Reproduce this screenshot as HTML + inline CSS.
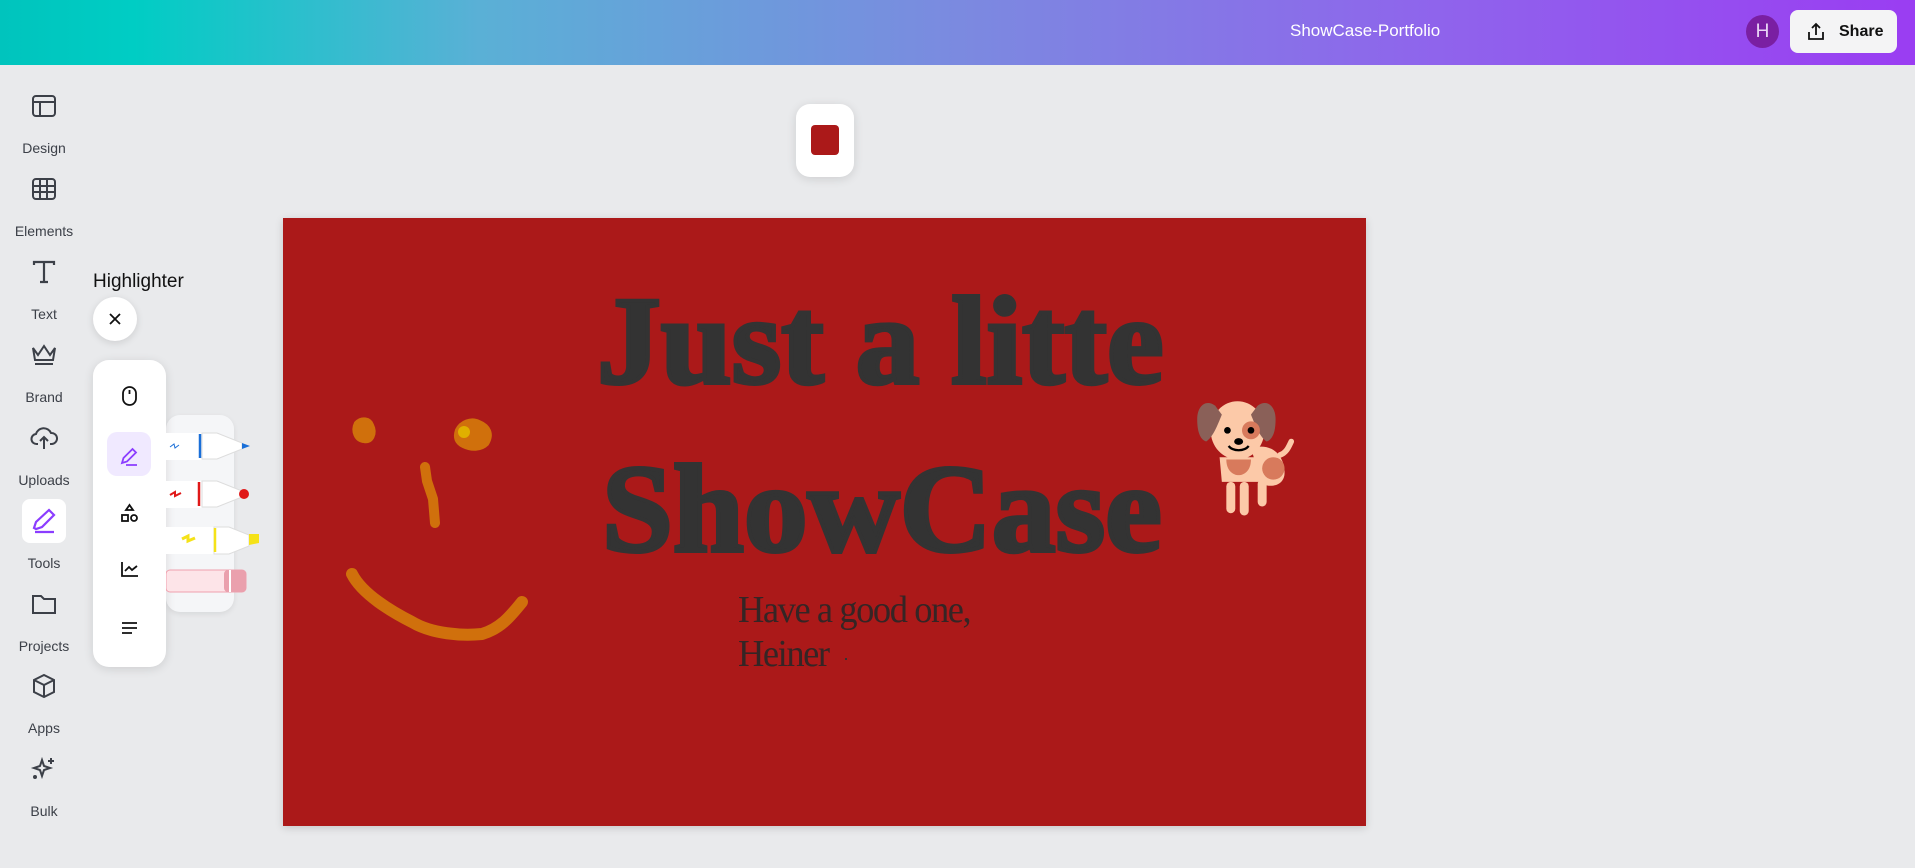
<!DOCTYPE html>
<html><head><meta charset="utf-8"><style>
*{margin:0;padding:0;box-sizing:border-box}
body{width:1915px;height:868px;overflow:hidden;background:#e9eaec;font-family:"Liberation Sans",sans-serif;position:relative}
.hdr{position:absolute;left:0;top:0;width:1915px;height:65px;background:linear-gradient(90deg,#00c4bd 0%,#00cdc4 7%,#5ab0d6 25%,#7b8ae0 50%,#8f64ec 75%,#9a3df2 100%)}
.title{position:absolute;left:1290px;top:21px;color:#fff;font-size:17px}
.av{position:absolute;left:1746px;top:15px;width:33px;height:33px;border-radius:50%;background:#7a1fa2;color:#e9d5f5;font-size:19px;text-align:center;line-height:33px}
.share{position:absolute;left:1790px;top:10px;width:107px;height:43px;border-radius:8px;background:#f4f4f5;font-weight:bold;font-size:16px;color:#111}
.share span{position:absolute;left:49px;top:13px}
.sb{position:absolute;left:0;width:88px;text-align:center;font-size:14px;color:#3c4048}
.ic{position:absolute;left:30px;width:28px;height:28px}
.panel{position:absolute;background:#fff;border-radius:16px;box-shadow:0 2px 10px rgba(0,0,0,.12)}
.canvas{position:absolute;left:283px;top:218px;width:1083px;height:608px;background:#ab1919;box-shadow:0 2px 8px rgba(0,0,0,.15);overflow:hidden}
.big{position:absolute;font-family:"Liberation Serif",serif;font-weight:bold;font-size:125px;color:#333;white-space:nowrap;line-height:1;-webkit-text-stroke:4px #333;transform:scaleX(1.02);transform-origin:0 0}
.sm{position:absolute;font-family:"Liberation Serif",serif;font-size:38px;letter-spacing:-1.5px;color:#352525;white-space:nowrap;line-height:1;transform:scaleX(0.96);transform-origin:0 0}
</style></head><body>
<div class="hdr">
<div class="title">ShowCase-Portfolio</div>
<div class="av">H</div>
<div class="share"><svg style="position:absolute;left:16px;top:12px" width="20" height="20" viewBox="0 0 20 20" fill="none" stroke="#111" stroke-width="1.8"><path d="M10 13V2M6 6l4-4 4 4M3 10v7h14v-7"/></svg><span>Share</span></div>
</div>

<svg class="ic" style="top:92px" viewBox="0 0 28 28" fill="none" stroke="#3c4048" stroke-width="2"><rect x="3" y="4" width="22" height="20" rx="3"/><path d="M3 10h22M10 10v14"/></svg>
<div class="sb" style="top:140px">Design</div>
<svg class="ic" style="top:175px" viewBox="0 0 28 28" fill="none" stroke="#3c4048" stroke-width="2"><rect x="3" y="4" width="22" height="20" rx="3"/><path d="M3 11h22M3 17h22M10 4v20M17 4v20"/></svg>
<div class="sb" style="top:223px">Elements</div>
<svg class="ic" style="top:258px" viewBox="0 0 28 28" fill="none" stroke="#3c4048" stroke-width="2.2"><path d="M4 7V4h20v3M14 4v20M10 24h8"/></svg>
<div class="sb" style="top:306px">Text</div>
<svg class="ic" style="top:341px" viewBox="0 0 28 28" fill="none" stroke="#3c4048" stroke-width="2"><path d="M3 7l5 7 6-9 6 9 5-7-2 12H5z M5 23h18"/></svg>
<div class="sb" style="top:389px">Brand</div>
<svg class="ic" style="top:424px" viewBox="0 0 28 28" fill="none" stroke="#3c4048" stroke-width="2"><path d="M8 20H7a5 5 0 0 1-1-10 8 8 0 0 1 15-1 5 5 0 0 1 1 11h-2M14 25V13M10 17l4-4 4 4"/></svg>
<div class="sb" style="top:472px">Uploads</div>
<div style="position:absolute;left:22px;top:499px;width:44px;height:44px;border-radius:8px;background:#fff"></div>
<svg class="ic" style="top:507px" viewBox="0 0 28 28" fill="none" stroke="#8b3dff" stroke-width="2.2"><path d="M4 21l2-6L19 3l5 5-12 12-6 2z M5 25h19"/></svg>
<div class="sb" style="top:555px">Tools</div>
<svg class="ic" style="top:590px" viewBox="0 0 28 28" fill="none" stroke="#3c4048" stroke-width="2"><path d="M3 6h8l3 3h11v14H3z"/></svg>
<div class="sb" style="top:638px">Projects</div>
<svg class="ic" style="top:672px" viewBox="0 0 28 28" fill="none" stroke="#3c4048" stroke-width="2"><path d="M14 3l10 5v12l-10 5-10-5V8z M4 8l10 5 10-5M14 13v12"/></svg>
<div class="sb" style="top:720px">Apps</div>
<svg class="ic" style="top:755px" viewBox="0 0 28 28" fill="none" stroke="#3c4048" stroke-width="2"><path d="M12 5l2 6 6 2-6 2-2 6-2-6-6-2 6-2z M21 3v6M18 6h6"/><circle cx="5" cy="22" r="1" fill="#3c4048"/></svg>
<div class="sb" style="top:803px">Bulk</div>

<div style="position:absolute;left:93px;top:271px;font-size:19px;color:#111">Highlighter</div>
<div style="position:absolute;left:93px;top:297px;width:44px;height:44px;border-radius:50%;background:#fff;box-shadow:0 2px 8px rgba(0,0,0,.12)"><svg style="position:absolute;left:14px;top:14px" width="16" height="16" viewBox="0 0 16 16" stroke="#111" stroke-width="1.8"><path d="M3 3l10 10M13 3L3 13"/></svg></div>
<div style="position:absolute;left:166px;top:415px;width:68px;height:197px;border-radius:14px;background:#f5f6f8;box-shadow:0 2px 6px rgba(0,0,0,.08)"></div>
<div class="panel" style="left:93px;top:360px;width:73px;height:307px"></div>
<div style="position:absolute;left:107px;top:432px;width:44px;height:44px;border-radius:10px;background:#f0e9ff"></div>
<svg style="position:absolute;left:93px;top:360px" width="73" height="307" viewBox="0 0 73 307" fill="none" stroke="#111" stroke-width="1.8">
<rect x="30" y="27" width="13" height="18" rx="6.5"/><path d="M36.5 30v4"/>
<path stroke="#8b3dff" d="M29 103l1.5-5 9-9 3.5 3.5-9 9z M33 105h11"/>
<path d="M36.5 145l3.5 5h-7z" /><rect x="29" y="155" width="6" height="6"/><circle cx="41" cy="158" r="3"/>
<path d="M29 202v14h16M32 211l4-4 3 3 5-4"/>
<path d="M29 263h15M29 268h15M29 273h10"/>
</svg>
<svg style="position:absolute;left:166px;top:425px" width="100" height="180" viewBox="0 0 100 180">
<g><rect x="0" y="8" width="36" height="27" fill="#fff"/><path d="M36 8h15l25 10v6l-25 10H36z" fill="#fff" stroke="#ddd"/><path d="M34 9v24" stroke="#1a6fd8" stroke-width="2.5"/><path d="M76 18l8 3-8 3z" fill="#1a6fd8"/><path d="M4 22l4-3 1 4 4-3" stroke="#1a6fd8" fill="none"/></g>
<g transform="translate(0,48)"><rect x="0" y="8" width="36" height="27" fill="#fff"/><path d="M36 8h15l25 10v6l-25 10H36z" fill="#fff" stroke="#ddd"/><path d="M33 9v24" stroke="#e01818" stroke-width="2.5"/><circle cx="78" cy="21" r="5" fill="#e01818"/><path d="M4 22l5-3 0 4 6-3" stroke="#e01818" stroke-width="2" fill="none"/></g>
<g transform="translate(0,94)"><rect x="0" y="8" width="48" height="27" fill="#fff"/><path d="M48 8h15l20 8v11l-20 8H48z" fill="#fff" stroke="#ddd"/><path d="M49 9v24" stroke="#f5e218" stroke-width="2.5"/><path d="M83 15h10v9l-10 2z" fill="#f5e218"/><path d="M16 20l6-3 0 5 7-3" stroke="#f5e218" stroke-width="3" fill="none"/></g>
<g transform="translate(0,145)"><rect x="0" y="0" width="80" height="22" rx="4" fill="#fde4e8" stroke="#f0a0ae"/><rect x="58" y="0" width="22" height="22" rx="4" fill="#eaa0ad"/><path d="M64 0v22" stroke="#fff" stroke-width="2"/></g>
</svg>

<div class="panel" style="left:796px;top:104px;width:58px;height:73px;border-radius:14px"></div>
<div style="position:absolute;left:811px;top:125px;width:28px;height:30px;border-radius:4px;background:#ab1919"></div>

<div class="canvas">
<div class="big" style="left:314px;top:62px">Just a litte</div>
<div class="big" style="left:319px;top:230px">ShowCase</div>
<div class="sm" style="left:455px;top:373px">Have a good one,</div>
<div class="sm" style="left:455px;top:417px">Heiner</div>
<div style="position:absolute;left:562px;top:440px;width:2px;height:2px;background:#333"></div>
<svg style="position:absolute;left:0;top:0" width="1083" height="608" viewBox="0 0 1083 608">
<g transform="translate(-283,-218)" fill="#d0700c" stroke="#d0700c" stroke-linecap="round" stroke-linejoin="round">
<path d="M356 423c6-6 14-4 16 2 4 8 0 18-8 16-8 0-12-10-8-18z" stroke-width="4"/>
<path d="M457 430c4-8 14-12 22-8 10 4 14 12 8 22-6 6-16 6-24 2-8-4-8-10-6-16z" stroke-width="4"/>
<circle cx="464" cy="432" r="6" fill="#e0b000" stroke="none"/>
<path d="M425 467l2 14 6 18 2 24" fill="none" stroke-width="10"/>
<path d="M352 574c10 20 40 38 60 48 20 12 50 14 70 12 20-6 30-20 40-32" fill="none" stroke-width="12"/>
</g>
<g transform="translate(903,172) scale(1.12)">
<rect x="36" y="82" width="8" height="28" rx="4" fill="#fcc9a8"/>
<rect x="48" y="82" width="8" height="30" rx="4" fill="#fcc9a8"/>
<rect x="64" y="80" width="8" height="24" rx="4" fill="#fcc9a8"/>
<path d="M30 60h46l2 22H32z" fill="#fcc9a8"/>
<path d="M58 52c20-6 30 8 30 22 0 10-10 14-20 10z" fill="#fcc9a8"/>
<path d="M84 58c6-2 8-8 10-12" stroke="#fcc9a8" stroke-width="5" fill="none" stroke-linecap="round"/>
<ellipse cx="46" cy="36" rx="24" ry="26" fill="#fcc9a8"/>
<path d="M26 14c-8-6-16 0-16 12 0 10 2 18 8 20 6-4 10-14 14-24z" fill="#8a6058"/>
<path d="M64 14c8-6 16 0 16 12 0 10-2 18-8 20-6-4-10-14-14-24z" fill="#8a6058"/>
<circle cx="58" cy="36" r="8" fill="#d87a5c"/>
<circle cx="37" cy="36" r="3" fill="#000"/><circle cx="58" cy="36" r="3" fill="#000"/>
<ellipse cx="47" cy="46" rx="4" ry="3" fill="#000"/>
<path d="M38 50c4 5 14 5 18 0" stroke="#000" stroke-width="2" fill="none"/>
<circle cx="78" cy="70" r="10" fill="#d87a5c"/>
<path d="M36 62h22c0 10-6 14-11 14s-11-4-11-14z" fill="#d87a5c"/>
</g>
</svg>
</div>
</body></html>
